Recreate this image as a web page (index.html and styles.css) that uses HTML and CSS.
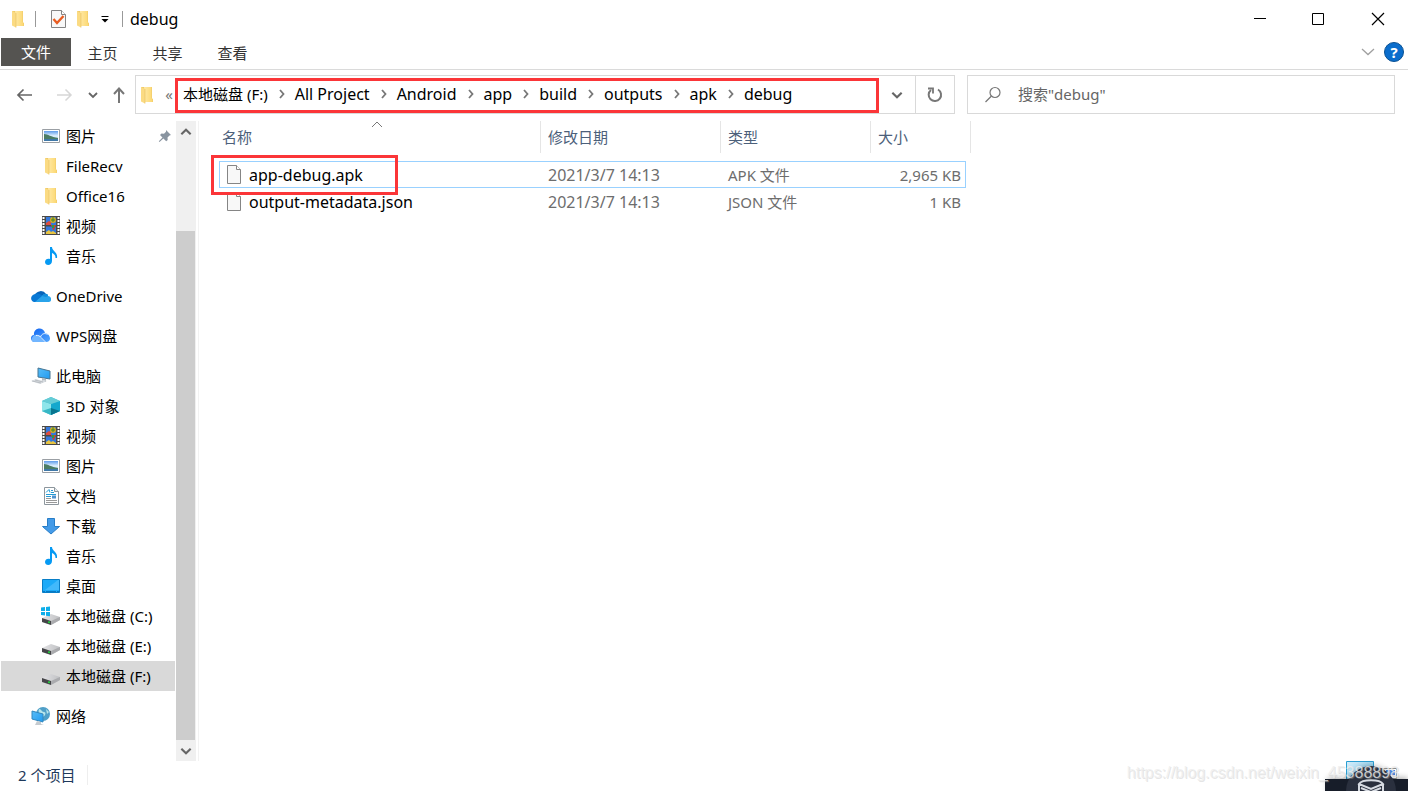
FILE: index.html
```html
<!DOCTYPE html>
<html lang="zh-CN">
<head>
<meta charset="utf-8">
<title>debug</title>
<link rel="stylesheet" href="styles.css">
</head>
<body>
<svg class="defs" aria-hidden="true">
  <defs>
    <linearGradient id="gf" x1="0" x2="1"><stop offset="0" stop-color="#ffe9a6"/><stop offset="1" stop-color="#fcd872"/></linearGradient>
    <linearGradient id="gdisk" x1="0" x2="1"><stop offset="0" stop-color="#e4e4e6"/><stop offset="1" stop-color="#bfc0c3"/></linearGradient>
    <linearGradient id="gscreen" x1="0" x2="1" y2="1"><stop offset="0" stop-color="#58bdf7"/><stop offset="1" stop-color="#219af0"/></linearGradient>
    <linearGradient id="gwps" x1="0" x2="1" y2="1"><stop offset="0" stop-color="#0e62f0"/><stop offset="1" stop-color="#55a8ff"/></linearGradient>
    <linearGradient id="gphoto" x1="0" x2="0" y2="1"><stop offset="0" stop-color="#5d9bea"/><stop offset=".5" stop-color="#e4f3ff"/><stop offset="1" stop-color="#7fb4d6"/></linearGradient>
  </defs>
  <symbol id="folder" viewBox="0 0 20 20"><path d="M4 2h11v11.500l1 .5v3H7z" fill="#eec868"/><path d="M7 2h7.500v11l1 1v3H8z" fill="url(#gf)"/><path d="M4 2l4 2v14.500l-4-2z" fill="#fbdb83"/><path d="M8 4v14.500" stroke="#e9c365" stroke-width=".7"/></symbol>
  <symbol id="picture" viewBox="0 0 20 20"><path d="M1.500 3.500h17v13h-17z" fill="#fff" stroke="#9a9fa4"/><path d="M3 5h14v10H3z" fill="url(#gphoto)"/><path d="M3 8c4 0 7 3 14 4v1H3z" fill="#4b7c65"/><path d="M3 13h14v2H3z" fill="#3f78a8"/></symbol>
  <symbol id="video" viewBox="0 0 20 20"><path d="M1 0h18v19H1z" fill="#494949"/><path d="M2.500 1v18M17.500 1v18" stroke="#fff" stroke-width="2" stroke-dasharray="2 1"/><path d="M5 1h10v8H5zM5 10.500h10V18H5z" fill="#3578dc"/><path d="M5 7l3-2 2 1v3H5z" fill="#e04c3c"/><circle cx="12" cy="4" r="3" fill="#d6ae1b"/><path d="M10 4h4M12 1v5" stroke="#36843b"/><path d="M10 9h5l-2 5h-1z" fill="#c74630"/><path d="M11 9h2v3h-2z" fill="#2d9c3e"/><path d="M5 16l3-2 2 2 2-1 3 2v1H5z" fill="#e8c441"/></symbol>
  <symbol id="music" viewBox="0 0 20 20"><path d="M9 1h2c0 4 6 5 5 11h-1.500c0-3-1.500-4-3.500-5v8c0 5-7 5-7 1 0-3 3-4 5-3z" fill="#069af3"/></symbol>
  <symbol id="onedrive" viewBox="0 0 20 20"><path d="M4 9a6 5.500 0 0 1 11-1l-5 5z" fill="#0864b9"/><path d="M4 8c3-1 5 0 8 2l-7 6H3c-4-1-4-7 1-8z" fill="#0878d4"/><path d="M11 10c2-3 6-3 6 0 4 0 4 6 1 6H4z" fill="#29a3ea"/><path d="M11 10c2-3 6-3 6 0l-2 1z" fill="#138ddb"/></symbol>
  <symbol id="wps" viewBox="0 0 20 20"><path d="M3 9a5.500 5.500 0 0 1 11-2c6 1 7 9 1 9H3c-4-1-4-7 0-7z" fill="url(#gwps)"/><path d="M1 12c2-4 6-4 8-1l5 5H3c-2 0-3-2-2-4z" fill="#72b6ff"/><path d="M5 9.500c2-.5 4 .5 5 2l4.500 4.500M9.500 11c1-3 4-4.500 7-2.500" fill="none" stroke="#eaf5ff"/></symbol>
  <symbol id="pc" viewBox="0 0 20 20"><path d="M7 2l12 3v8L7 11z" fill="url(#gscreen)" stroke="#477491"/><path d="M11 12v3l4 1v-3z" fill="#b3b9bd"/><path d="M8 15l5-1 3 1-6 2z" fill="#d7dce0"/><path d="M0 15l5-2 9 3-5 2z" fill="#d9dde1"/><path d="M1 15l9 2M4 14l8 2" stroke="#a9afb4" stroke-width=".7"/></symbol>
  <symbol id="cube" viewBox="0 0 20 20"><path d="M10 1l9 4v10l-9 4-9-4V5z" fill="#35bdd0"/><path d="M1 5l9 3v11l-9-4z" fill="#8fe5ea"/><path d="M10 8l9-3v10l-9 4z" fill="#14a8cd"/><path d="M10 1l9 4-9 3-9-3z" fill="#66ccd6"/><path d="M1 15l9-3v7z" fill="#38b7c5"/><path d="M10 12l9 3-9 4z" fill="#08758f"/></symbol>
  <symbol id="doc" viewBox="0 0 20 20"><path d="M3.500 1.500h10l4 4v13h-14z" fill="#fff" stroke="#8d969d"/><path d="M13.500 1.500v4h4" fill="#e6ebef" stroke="#8d969d"/><path d="M5 6.500l3-3 1 3M10 4.500h2M10 6.500h3M5 8.500h10M5 10.500h5" stroke="#259bd5" fill="none"/><path d="M5 12.500h5M5 14.500h11M5 16.500h11" stroke="#999"/><path d="M11 9.500h4v3h-4z" fill="#4f93cf"/></symbol>
  <symbol id="down" viewBox="0 0 20 20"><path d="M6.500 2.500h7v8h5L10 18 1.500 10.500h5z" fill="#449be8" stroke="#277dc7"/></symbol>
  <symbol id="desktop" viewBox="0 0 20 20"><path d="M1.500 3.500h17v13h-17z" fill="#1caaf8" stroke="#087ec7"/><path d="M4 14L17 4h1v10z" fill="#42b9fb"/><path d="M2 15.500h16" stroke="#0879c2" stroke-dasharray="2 1 10 1"/></symbol>
  <symbol id="disk" viewBox="0 0 20 20"><path d="M1 12l9-4 9 3v3l-9 5-9-3z" fill="url(#gdisk)"/><path d="M1 12l9 3v4l-9-3z" fill="#454548"/><path d="M10 15l9-4v3l-9 5z" fill="#aaabae"/><circle cx="8" cy="16.300" r="1" fill="#1fe03c"/></symbol>
  <symbol id="win" viewBox="0 0 20 20"><use href="#disk"/><path d="M0 1.500l4-.5v4H0zM5 1l4-.6V5H5zM0 6h4v3.600L0 9zM5 6h4v4.300l-4-.6z" fill="#0daeea"/></symbol>
  <symbol id="network" viewBox="0 0 20 20"><circle cx="12" cy="8" r="7" fill="#4f9fc8"/><path d="M8 3c3 0 2 3 5 3s1 5-2 5-4-5-3-8zM15 3l3 3-2 2z" fill="#b6e4eb"/><path d="M1 5l11 3v8L1 13z" fill="url(#gscreen)" stroke="#3288be"/><path d="M6 15l4 1v2l3 1H4z" fill="#c5cbd0"/></symbol>
  <symbol id="file" viewBox="0 0 16 20"><path d="M1.500.5h9l4 4v14h-13z" fill="#f8f8f8" stroke="#858585"/><path d="M10.500.5v4h4" fill="#fff" stroke="#858585"/></symbol>
  <symbol id="chev" viewBox="0 0 12 12"><path d="M2 4l4 4 4-4" fill="none" stroke="currentColor" stroke-width="1.800"/></symbol>
  <symbol id="next" viewBox="0 0 12 12"><path d="M4 2l3.500 4L4 10" fill="none" stroke="currentColor" stroke-width="1.800"/></symbol>
</svg>
<div class="window">
  <header class="titlebar">
    <svg class="icon"><use href="#folder"/></svg>
    <i class="divider first"></i>
    <button class="plain" aria-label="属性"><svg class="icon" viewBox="0 0 20 20"><path d="M3.500 1.500h10l4 4v13h-14z" fill="#f8f8f8" stroke="#858585"/><path d="M13.500 1.500v4h4" fill="#fff" stroke="#858585"/><path d="M5.500 10l3.500 4L15.500 7" fill="none" stroke="#e85d22" stroke-width="2.400"/></svg></button>
    <button class="plain new-folder" aria-label="新建文件夹"><svg class="icon"><use href="#folder"/></svg></button>
    <button class="plain menu" aria-label="自定义快速访问工具栏"><svg width="10" height="10" viewBox="0 0 10 10"><path d="M1.500 2.500h7" stroke="#000"/><path d="M1.500 5h7L5 8.500z"/></svg></button>
    <i class="divider"></i>
    <span class="title">debug</span>
    <div class="controls">
      <button class="plain" aria-label="最小化"><svg viewBox="0 0 14 14"><path d="M1 6.500h12" stroke="#000"/></svg></button>
      <button class="plain" aria-label="最大化"><svg viewBox="0 0 14 14"><path d="M1.500 1.500h11v11h-11z" fill="none" stroke="#000"/></svg></button>
      <button class="plain" aria-label="关闭"><svg viewBox="0 0 14 14"><path d="M1 1l12 12M13 1L1 13" stroke="#000" stroke-width="1.200"/></svg></button>
    </div>
  </header>
  <nav class="ribbon" aria-label="功能区">
    <button class="tab active">文件</button><button class="tab">主页</button><button class="tab">共享</button><button class="tab">查看</button>
    <button class="plain expand" aria-label="展开功能区"><svg width="14" height="10" viewBox="0 0 14 10"><path d="M1 2l6 5.500L13 2" fill="none" stroke="#a0a0a0" stroke-width="1.300"/></svg></button>
    <button class="help" aria-label="帮助">?</button>
  </nav>
  <div class="navigation">
    <div class="arrows">
      <button class="plain back" aria-label="后退"><svg width="18" height="16" viewBox="0 0 18 16"><path d="M16 8H2M7.500 2.500L2 8l5.500 5.500" fill="none" stroke="#666" stroke-width="1.700"/></svg></button>
      <button class="plain forward" aria-label="前进"><svg width="18" height="16" viewBox="0 0 18 16"><path d="M2 8h14M10.500 2.500L16 8l-5.500 5.500" fill="none" stroke="#d6d6d6" stroke-width="1.500"/></svg></button>
      <button class="plain recent" aria-label="最近位置"><svg width="12" height="12"><use href="#chev"/></svg></button>
      <button class="plain up" aria-label="上移"><svg width="16" height="18" viewBox="0 0 16 18"><path d="M8 17V3M3 8l5-5.500L13 8" fill="none" stroke="#777" stroke-width="2"/></svg></button>
    </div>
    <div class="address">
      <svg class="icon"><use href="#folder"/></svg><span class="more">«</span>
      <nav class="crumbs" aria-label="地址">
        <a href="#" class="drive">本地磁盘 (F:)</a><svg><use href="#next"/></svg><a href="#">All Project</a><svg><use href="#next"/></svg><a href="#">Android</a><svg><use href="#next"/></svg><a href="#">app</a><svg><use href="#next"/></svg><a href="#">build</a><svg><use href="#next"/></svg><a href="#">outputs</a><svg><use href="#next"/></svg><a href="#">apk</a><svg><use href="#next"/></svg><a href="#">debug</a>
      </nav>
      <button class="plain history" aria-label="以前的位置"><svg width="14" height="14"><use href="#chev"/></svg></button>
      <button class="plain refresh" aria-label="刷新"><svg width="18" height="18" viewBox="0 0 18 18"><path d="M12 3.500A6.200 6.200 0 1 1 5 4" fill="none" stroke="#777" stroke-width="2"/><path d="M2 2.500h5v5" fill="none" stroke="#777" stroke-width="1.800"/></svg></button>
    </div>
    <label class="search"><svg width="18" height="18" viewBox="0 0 18 18"><circle cx="11" cy="6.500" r="5" fill="none" stroke="#777" stroke-width="1.200"/><path d="M7.500 10L1.500 16" stroke="#777" stroke-width="1.200"/></svg><input type="text" placeholder='搜索"debug"' aria-label="搜索"></label>
  </div>
  <main class="content">
    <aside class="sidebar">
      <ul class="tree">
        <li class="child"><svg class="icon"><use href="#picture"/></svg><a href="#">图片</a><svg class="pin" viewBox="0 0 14 14"><path d="M8 1l5 5-1.500.5-2 2 .2 2.500-1.500 1.300-2.800-2.800L1.500 13l-.7-.7 3.700-3.900L2 6l1.500-1.500 2.500.3L8 2.700z" fill="#8994a0"/></svg></li>
        <li class="child"><svg class="icon"><use href="#folder"/></svg><a href="#">FileRecv</a></li>
        <li class="child"><svg class="icon"><use href="#folder"/></svg><a href="#">Office16</a></li>
        <li class="child"><svg class="icon"><use href="#video"/></svg><a href="#">视频</a></li>
        <li class="child"><svg class="icon"><use href="#music"/></svg><a href="#">音乐</a></li>
        <li class="root"><svg class="icon"><use href="#onedrive"/></svg><a href="#">OneDrive</a></li>
        <li class="root"><svg class="icon"><use href="#wps"/></svg><a href="#">WPS网盘</a></li>
        <li class="root"><svg class="icon"><use href="#pc"/></svg><a href="#">此电脑</a></li>
        <li class="child"><svg class="icon"><use href="#cube"/></svg><a href="#">3D 对象</a></li>
        <li class="child"><svg class="icon"><use href="#video"/></svg><a href="#">视频</a></li>
        <li class="child"><svg class="icon"><use href="#picture"/></svg><a href="#">图片</a></li>
        <li class="child"><svg class="icon"><use href="#doc"/></svg><a href="#">文档</a></li>
        <li class="child"><svg class="icon"><use href="#down"/></svg><a href="#">下载</a></li>
        <li class="child"><svg class="icon"><use href="#music"/></svg><a href="#">音乐</a></li>
        <li class="child"><svg class="icon"><use href="#desktop"/></svg><a href="#">桌面</a></li>
        <li class="child"><svg class="icon"><use href="#win"/></svg><a href="#">本地磁盘 (C:)</a></li>
        <li class="child"><svg class="icon"><use href="#disk"/></svg><a href="#">本地磁盘 (E:)</a></li>
        <li class="child selected"><svg class="icon"><use href="#disk"/></svg><a href="#">本地磁盘 (F:)</a></li>
        <li class="root"><svg class="icon"><use href="#network"/></svg><a href="#">网络</a></li>
      </ul>
      <div class="scrollbar">
        <button class="plain" aria-label="向上滚动"><svg class="flip" width="14" height="14"><use href="#chev"/></svg></button>
        <div class="track"><div class="thumb"></div></div>
        <button class="plain" aria-label="向下滚动"><svg width="14" height="14"><use href="#chev"/></svg></button>
      </div>
    </aside>
    <section class="files">
      <table>
        <colgroup><col class="c-name"><col class="c-date"><col class="c-type"><col class="c-size"></colgroup>
        <thead><tr><th>名称<svg class="sort" viewBox="0 0 12 8"><path d="M1 6l5-5 5 5" fill="none" stroke="#777"/></svg></th><th>修改日期</th><th>类型</th><th>大小</th></tr></thead>
        <tbody>
          <tr class="focused"><td><div class="name"><svg><use href="#file"/></svg>app-debug.apk</div><i class="mark"></i></td><td class="date">2021/3/7 14:13</td><td>APK 文件</td><td>2,965 KB</td></tr>
          <tr><td><div class="name"><svg><use href="#file"/></svg>output-metadata.json</div></td><td class="date">2021/3/7 14:13</td><td>JSON 文件</td><td>1 KB</td></tr>
        </tbody>
      </table>
    </section>
  </main>
  <footer class="status"><span>2 个项目</span></footer>
  <div class="corner">
    <svg viewBox="0 0 84 32"><defs><linearGradient id="gview" x2="1" y2="1"><stop stop-color="#d8eefa"/><stop offset="1" stop-color="#70c2e8"/></linearGradient><filter id="soft" x="-20%" y="-50%" width="140%" height="200%"><feGaussianBlur stdDeviation="3"/></filter></defs><path d="M22.500 2.500h27v20h-27z" fill="url(#gview)" stroke="#2b9ed2"/><path d="M52.500 9.500h20v10h-20z" fill="#fff" stroke="#888"/><path d="M62 11h9v5h-9z" fill="#4386e8"/><path d="M4 19H84v15H4z" fill="#000" opacity=".35" filter="url(#soft)"/><circle cx="47" cy="31" r="24" fill="#000" opacity=".3" filter="url(#soft)"/><path d="M1 20h83v12H1z" fill="#171d29"/><circle cx="47" cy="32" r="25" fill="#2a303e"/><path d="M35 25c3-5 21-5 24 0l-12 5zM35 25v7M59 25v7M37 29l10 4 10-4" fill="none" stroke="#d7dbe2" stroke-width="2"/></svg>
    <span class="watermark">https://blog.csdn.net/weixin_45388898</span>
  </div>
</div>
</body>
</html>
```
FILE: styles.css
```css
* { box-sizing: border-box; }
body { margin: 0; background: #fff; color: #000; font: 15px/20px "Noto Sans", "Noto Sans CJK SC", sans-serif; }
a { color: inherit; text-decoration: none; }
svg { display: block; flex: none; }
button { font: inherit; color: inherit; }
.defs { position: absolute; width: 0; height: 0; }
.icon { width: 20px; height: 20px; }
.plain { display: flex; align-items: center; justify-content: center; padding: 0; border: 0; background: none; color: #666; }
.window { position: relative; display: flex; flex-direction: column; min-height: 100vh; overflow: hidden; }

.titlebar { display: flex; align-items: center; height: 38px; padding-left: 8px; }
.title { font-size: 16px; }
.divider { width: 1px; height: 16px; margin: 0 7px 0 12px; background: #999; }
.divider.first { margin: 0 12px 0 7px; }
.new-folder { margin-left: 5px; }
.menu { margin-left: 7px; }
.controls { display: flex; margin-left: auto; }
.controls .plain { width: 58px; height: 38px; }
.controls .plain:last-child { width: 61px; }
.controls svg { width: 14px; height: 14px; }

.ribbon { display: flex; align-items: center; height: 32px; padding: 0 4px 3px 1px; border-bottom: 1px solid #dadada; }
.tab { width: 65px; height: 28px; padding: 1px 2px 0 0; border: 0; background: none; color: #333; }
.tab.active { width: 70px; padding: 0; background: #555451; color: #fff; }
.expand { margin-left: auto; }
.help { width: 20px; height: 20px; margin-left: 9px; padding: 0; border: 1px solid #0a5192; border-radius: 50%; background: #0a6dcc; color: #fff; font-weight: 700; line-height: 18px; }

.navigation { display: grid; grid-template-columns: 135px minmax(0, 820fr) 12px minmax(0, 428fr); height: 51px; padding: 5px 13px 7px 0; }
.arrows { display: flex; align-items: center; padding-left: 16px; }
.forward { margin-left: 21px; }
.recent { margin-left: 14px; }
.up { margin-left: 12px; }
.address { display: flex; border: 1px solid #d9d9d9; }
.address .icon { align-self: center; margin-left: 1px; }
.more { align-self: center; width: 18px; padding-bottom: 2px; text-align: right; padding-right: 2px; color: #777; }
.crumbs { display: flex; flex: 1; align-items: center; min-width: 0; margin-top: 2px; padding: 0 0 4px 5px; border: 3px solid #fb3538; font-size: 16px; white-space: nowrap; }
.drive { font-size: 15px; }
.crumbs svg { width: 12px; height: 12px; margin: 0 7px 0 8px; color: #777; }
.history { width: 36px; }
.refresh { width: 39px; border-left: 1px solid #d9d9d9; }
.search { display: flex; grid-column: 4; align-items: center; padding-left: 16px; border: 1px solid #d9d9d9; }
.search input { flex: 1; min-width: 0; height: 34px; margin-left: 16px; padding: 0 0 2px; border: 0; outline: 0; background: none; font: inherit; }
.search input::placeholder { color: #666; opacity: 1; }

.content { display: flex; flex: 1; }
.sidebar { display: flex; width: 199px; border-right: 1px solid #f2f2f2; }
.tree { flex: 1; margin: 0 1px; padding: 0; list-style: none; }
.tree li { display: flex; align-items: center; gap: 5px; height: 30px; }
.tree .child { padding-left: 40px; }
.tree .root { margin-top: 10px; padding-left: 30px; }
.tree .selected { background: #d9d9d9; }
.tree .pin { width: 14px; height: 14px; margin: 0 3px 0 auto; }
.scrollbar { display: flex; flex-direction: column; width: 20px; margin-right: 2px; background: #f0f0f0; }
.scrollbar .plain { height: 21px; }
.track { flex: 1; padding: 89px 1px 0 0; }
.thumb { height: 100%; background: #cdcdcd; }
.flip { transform: rotate(180deg); }

.files { flex: 1; padding-left: 12px; }
table { width: 760px; table-layout: fixed; border-collapse: separate; border-spacing: 0; }
.c-name { width: 330px; }
.c-date { width: 180px; }
.c-type { width: 150px; }
.c-size { width: 100px; }
th { position: relative; height: 32px; padding: 0 7px; border-right: 1px solid #e5e5e5; color: #4c607a; font-weight: 400; text-align: left; }
th:first-child { padding-left: 11px; }
.sort { position: absolute; left: 160px; top: 0; width: 12px; height: 8px; }
tbody::before { content: ""; display: block; height: 8px; }
tbody tr { position: relative; }
td { height: 27px; padding: 0 7px; color: #6d6d6d; white-space: nowrap; }
td:first-child { padding-left: 15px; color: #000; }
td:last-child { padding-right: 10px; text-align: right; }
.date { font-size: 16px; }
.name { display: flex; align-items: center; gap: 7px; font-size: 16px; }
.name svg { width: 16px; height: 20px; }
.focused::after { content: ""; position: absolute; inset: 0 5px 0 8px; border: 1px solid #99d1ff; }
.mark { position: absolute; z-index: 1; left: 0; top: -6px; width: 187px; height: 40px; border: 3px solid #fb3538; }

.status { display: flex; align-items: center; height: 30px; padding: 0 0 2px 18px; color: #1e395b; }
.status span { padding-right: 12px; border-right: 1px solid #eee; }
.corner { position: absolute; right: 0; bottom: 0; }
.corner svg { width: 84px; height: 32px; overflow: visible; }
.watermark { position: absolute; right: 9px; bottom: 8px; color: rgba(238, 238, 238, .8); font: 16px/20px "Liberation Sans", sans-serif; text-shadow: 1px 1px 0 rgba(180, 180, 180, .35); }
```
